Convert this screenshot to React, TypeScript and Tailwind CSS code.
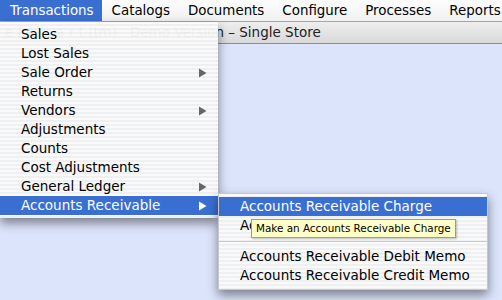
import React from "react";

const stripes =
  "bg-[repeating-linear-gradient(180deg,rgba(251,251,251,0.96)_0px,rgba(251,251,251,0.96)_2px,rgba(240,240,240,0.96)_2px,rgba(240,240,240,0.96)_4px)]";

function Arrow({ white }: { white?: boolean }) {
  return (
    <svg width="8" height="10" viewBox="0 0 8 10" className="shrink-0">
      <path d="M0 0.5 L7.5 5 L0 9.5 Z" fill={white ? "#ffffff" : "#666666"} />
    </svg>
  );
}

function Row({
  label,
  sub,
  active,
}: {
  label: string;
  sub?: boolean;
  active?: boolean;
}) {
  return (
    <div
      className={`h-[19px] flex items-center justify-between pl-[21px] pr-[11px] ${
        active ? "bg-[#3a6fd2] text-white" : "text-black"
      }`}
    >
      <span>{label}</span>
      {sub && <Arrow white={active} />}
    </div>
  );
}

export default function App() {
  const menus = ["Transactions", "Catalogs", "Documents", "Configure", "Processes", "Reports"];
  const items: { label: string; sub?: boolean }[] = [
    { label: "Sales" },
    { label: "Lost Sales" },
    { label: "Sale Order", sub: true },
    { label: "Returns" },
    { label: "Vendors", sub: true },
    { label: "Adjustments" },
    { label: "Counts" },
    { label: "Cost Adjustments" },
    { label: "General Ledger", sub: true },
  ];

  return (
    <div className="relative w-[502px] h-[300px] overflow-hidden bg-[#dce4fb] font-['DejaVu_Sans',sans-serif] text-[13.5px] leading-none">
      {/* menu bar */}
      <div className="h-[22px] flex items-stretch bg-[linear-gradient(180deg,#fdfdfd,#f1f1f1)] border-b border-[#a5a5a5] whitespace-nowrap">
        {menus.map((m, i) => (
          <div
            key={m}
            className={`flex items-center pl-[10px] pr-[8px] text-[13.4px] ${
              i === 0 ? "bg-[#3a6fd2] text-white" : "text-black"
            }`}
          >
            {m}
          </div>
        ))}
      </div>

      {/* window title bar */}
      <div className="h-[22px] flex items-center bg-[linear-gradient(180deg,#eeeeee,#d9d9d9)] border-b border-[#8e8e8e] text-[#222] whitespace-nowrap">
        <span className="-ml-[8px]">p e r s m a r t (tm)&nbsp;&nbsp;&nbsp;Demo Version – Single Store</span>
      </div>

      {/* dropdown menu */}
      <div
        className={`absolute left-0 top-[22px] w-[218px] pt-[3px] pb-[3px] ${stripes} shadow-[0_5px_10px_rgba(0,0,0,0.45)]`}
      >
        {items.map((it) => (
          <Row key={it.label} label={it.label} sub={it.sub} />
        ))}
        <Row label="Accounts Receivable" sub active />
      </div>

      {/* submenu */}
      <div
        className={`absolute left-[218px] top-[193px] w-[270px] pt-[3px] pb-[4px] ${stripes} border border-[#c8c8c8] shadow-[0_5px_10px_rgba(0,0,0,0.45)]`}
      >
        <Row label="Accounts Receivable Charge" active />
        <Row label="Accounts Receivable Payment" />
        <div className="h-[12px] flex items-center">
          <div className="w-full h-px bg-[#c9c9c9]" />
        </div>
        <Row label="Accounts Receivable Debit Memo" />
        <Row label="Accounts Receivable Credit Memo" />
      </div>

      {/* tooltip */}
      <div className="absolute left-[251px] top-[219px] h-[19px] px-[4px] flex items-center bg-[#ffffc7] border border-[#9a9a9a] text-[10.4px] text-black whitespace-nowrap shadow-[1px_1px_2px_rgba(0,0,0,0.25)]">
        Make an Accounts Receivable Charge
      </div>
    </div>
  );
}
